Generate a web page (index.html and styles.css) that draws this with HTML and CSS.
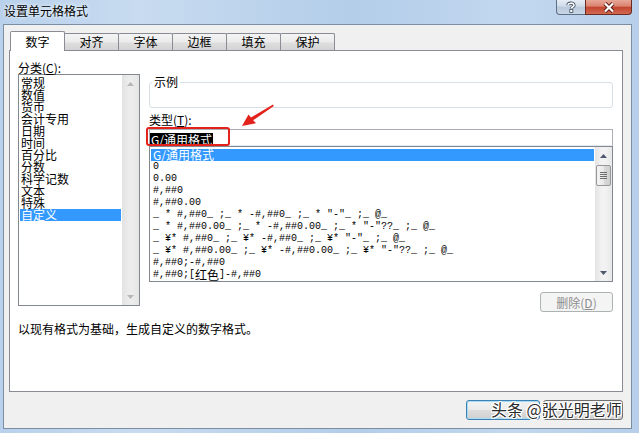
FILE: index.html
```html
<!DOCTYPE html>
<html lang="zh-CN">
<head>
    <meta charset="UTF-8">
    <title>设置单元格格式</title>
    <link rel="stylesheet" href="styles.css">
</head>
<body>

<div class="window">
    <div class="titlebar">
        <span class="title">设置单元格格式</span>
        <div class="caption-buttons">
            <div class="cap-btn cap-help">
                <svg width="14" height="12" viewBox="0 0 14 12">
                    <path d="M4 4.2 C4 1.6 10 1.4 10 4.2 C10 6 7.3 6 7.3 7.6" fill="none" stroke="#3b4a5c" stroke-width="3.2"/>
                    <path d="M4 4.2 C4 1.6 10 1.4 10 4.2 C10 6 7.3 6 7.3 7.6" fill="none" stroke="#fff" stroke-width="1.6"/>
                    <rect x="5.8" y="8.6" width="3" height="2.8" fill="#fff" stroke="#3b4a5c" stroke-width="0.8"/>
                </svg>
            </div>
            <div class="cap-btn cap-close">
                <svg width="14" height="11" viewBox="0 0 14 11">
                    <path d="M3 1.5 L11 9.5 M11 1.5 L3 9.5" stroke="#5a1e16" stroke-width="4"/>
                    <path d="M3 1.5 L11 9.5 M11 1.5 L3 9.5" stroke="#fff" stroke-width="2.2"/>
                </svg>
            </div>
        </div>
    </div>

    <div class="client">
        <div class="tabs">
            <div class="tab active">数字</div>
            <div class="tab">对齐</div>
            <div class="tab">字体</div>
            <div class="tab">边框</div>
            <div class="tab">填充</div>
            <div class="tab">保护</div>
        </div>

        <div class="panel">
            <div class="cols">
                <div class="cat-col">
                    <div class="label">分类(<u>C</u>):</div>
                    <div class="listbox">
                        <ul class="cat-items">
                            <li>常规</li>
                            <li>数值</li>
                            <li>货币</li>
                            <li>会计专用</li>
                            <li>日期</li>
                            <li>时间</li>
                            <li>百分比</li>
                            <li>分数</li>
                            <li>科学记数</li>
                            <li>文本</li>
                            <li>特殊</li>
                            <li class="selected">自定义</li>
                        </ul>
                        <div class="vscroll disabled">
                            <div class="arrow"><svg width="7" height="4" viewBox="0 0 7 4"><path d="M0 4 L3.5 0 L7 4Z" fill="#b7b7b7"/></svg></div>
                            <div class="track"></div>
                            <div class="arrow"><svg width="7" height="4" viewBox="0 0 7 4"><path d="M0 0 L3.5 4 L7 0Z" fill="#b7b7b7"/></svg></div>
                        </div>
                    </div>
                </div>

                <div class="main-col">
                    <div class="sample">
                        <span class="legend">示例</span>
                    </div>
                    <div class="label type-label">类型(<u>T</u>):</div>
                    <div class="type-input"><span class="sel-text">G/通用格式</span></div>
                    <div class="fmt-list">
                        <ul class="fmt-items">
                            <li class="selected">G/<span class="cn">通用格式</span></li>
                            <li>0</li>
                            <li>0.00</li>
                            <li>#,##0</li>
                            <li>#,##0.00</li>
                            <li>_ * #,##0_ ;_ * -#,##0_ ;_ * "-"_ ;_ @_</li>
                            <li>_ * #,##0.00_ ;_ * -#,##0.00_ ;_ * "-"??_ ;_ @_</li>
                            <li>_ ¥* #,##0_ ;_ ¥* -#,##0_ ;_ ¥* "-"_ ;_ @_</li>
                            <li>_ ¥* #,##0.00_ ;_ ¥* -#,##0.00_ ;_ ¥* "-"??_ ;_ @_</li>
                            <li>#,##0;-#,##0</li>
                            <li>#,##0;[<span class="cn">红色</span>]-#,##0</li>
                        </ul>
                        <div class="vscroll">
                            <div class="arrow"><svg width="7" height="4" viewBox="0 0 7 4"><path d="M0 4 L3.5 0 L7 4Z" fill="#4d5a6e"/></svg></div>
                            <div class="track">
                                <div class="thumb"><span></span><span></span><span></span><span></span></div>
                            </div>
                            <div class="arrow"><svg width="7" height="4" viewBox="0 0 7 4"><path d="M0 0 L3.5 4 L7 0Z" fill="#4d5a6e"/></svg></div>
                        </div>
                    </div>
                    <div class="del-row">
                        <button class="btn btn-disabled">删除(<u>D</u>)</button>
                    </div>
                </div>
            </div>
            <p class="desc">以现有格式为基础，生成自定义的数字格式。</p>
        </div>

        <!-- the OK / Cancel captions are hidden under the watermark in the shot -->
        <div class="footer">
            <button class="btn btn-default" aria-label="确定"></button>
            <button class="btn btn-cancel" aria-label="取消"></button>
        </div>
    </div>

    <!-- annotations drawn over the screenshot -->
    <div class="mark-box"></div>
    <svg class="mark-arrow" width="40" height="30" viewBox="238 100 40 30">
        <path d="M242 126 L248.5 114.5 L251 117.5 L273 104.5 L273.8 106 L253.2 120.3 L256 123.2 Z" fill="#e3221c"/>
    </svg>
    <div class="watermark">头条 @张光明老师</div>
</div>

</body>
</html>
```

FILE: styles.css
```css
* {
    box-sizing: border-box;
}

body {
    margin: 0;
    width: 639px;
    height: 433px;
    overflow: hidden;
    font-family: "Noto Sans CJK SC", "Liberation Sans", sans-serif;
    font-size: 12px;
    color: #000;
}

ul {
    list-style: none;
    margin: 0;
    padding: 0;
}

.window {
    position: relative;
    height: 433px;
    display: flex;
    flex-direction: column;
    background: linear-gradient(to right, #b9d1ec 0%, #c8dbf0 22%, #b3cde9 55%, #c2d7ef 80%, #b7cfea 100%);
}

/* title bar */

.titlebar {
    height: 24px;
    display: flex;
    align-items: flex-start;
    padding-right: 7px;
}

.title {
    padding: 3px 0 0 4px;
    line-height: 16px;
    text-shadow: 0 0 5px #eef5fc, 0 0 3px #eef5fc;
}

.caption-buttons {
    margin-left: auto;
    display: flex;
}

.cap-btn {
    height: 15px;
    display: flex;
    align-items: center;
    justify-content: center;
    border: 1px solid #5d6f87;
    border-top: none;
}

.cap-help {
    width: 29px;
    border-radius: 0 0 0 4px;
    border-right: none;
    background: linear-gradient(#e6edf5, #cfdbe8 45%, #b9c9db 50%, #c9d6e5);
}

.cap-close {
    width: 47px;
    border-color: #6b2a22;
    border-radius: 0 0 4px 0;
    background: linear-gradient(#e8a898, #d9826f 45%, #c4432e 50%, #d16a52);
}

/* dialog client area */

.client {
    flex: 1;
    margin: 0 7px 4px 3px;
    background: #f0f0f0;
    border: 1px solid #7d8ea3;
    padding: 6px 0 0 5px;
    display: flex;
    flex-direction: column;
}

.tabs {
    display: flex;
    align-items: flex-end;
    height: 20px;
    margin-bottom: -1px;
    padding-left: 1px;
}

.tab {
    width: 55px;
    height: 18px;
    margin-right: -1px;
    border: 1px solid #898c95;
    border-bottom: none;
    border-radius: 2px 2px 0 0;
    background: linear-gradient(#f4f4f4, #ebebeb 48%, #dedede 52%, #d2d2d2);
    text-align: center;
    line-height: 15px;
}

.tab.active {
    height: 20px;
    position: relative;
    z-index: 1;
    background: #fff;
    line-height: 19px;
}

.panel {
    width: 614px;
    height: 342px;
    border: 1px solid #898c95;
    background: #fff;
    padding: 11px 8px 0 8px;
}

.cols {
    display: flex;
    gap: 9px;
}

.label {
    line-height: 12px;
    height: 12px;
}

.cat-col {
    width: 122px;
}

.listbox {
    width: 122px;
    height: 232px;
    border: 1px solid #828790;
    display: flex;
}

.cat-items {
    flex: 1;
    padding: 2px 1px 0 1px;
}

.cat-items li {
    height: 12px;
    line-height: 12px;
    padding-left: 1px;
    white-space: nowrap;
}

.cat-items li.selected,
.fmt-items li.selected {
    background: #3399ff;
    color: #fff;
}

/* scrollbars */

.vscroll {
    width: 17px;
    display: flex;
    flex-direction: column;
    background: linear-gradient(to right, #e3e3e3, #f2f2f2 40%, #f2f2f2 60%, #e8e8e8);
}

.vscroll.disabled {
    background: linear-gradient(to right, #e2e2e2, #ececec 40%, #ececec 60%, #e4e4e4);
}

.vscroll .arrow {
    height: 17px;
    display: flex;
    align-items: center;
    justify-content: center;
}

.vscroll .track {
    flex: 1;
    padding: 1px 1px 0 1px;
}

.thumb {
    height: 21px;
    border: 1px solid #979797;
    border-radius: 2px;
    background: linear-gradient(to right, #f4f4f4, #e9e9e9 50%, #d9d9d9 51%, #cfcfcf);
    display: flex;
    flex-direction: column;
    align-items: center;
    justify-content: center;
    gap: 1px;
}

.thumb span {
    width: 7px;
    height: 1px;
    background: #6e6e6e;
}

/* right column */

.main-col {
    width: 464px;
    display: flex;
    flex-direction: column;
}

.sample {
    position: relative;
    margin-top: 20px;
    height: 26px;
    border: 1px solid #d5dfe5;
    border-radius: 3px;
}

.legend {
    position: absolute;
    top: -7px;
    left: 2px;
    padding: 0 2px;
    line-height: 12px;
    background: #fff;
}

.type-label {
    margin-top: 6px;
}

.type-input {
    margin-top: 3px;
    height: 17px;
    border: 1px solid #abadb3;
    border-bottom-color: #e3e9ef;
    padding: 1px 0 0 0;
}

.sel-text {
    display: inline-block;
    background: #000;
    color: #fff;
    line-height: 13px;
    padding: 0 1px 0 1px;
}

.fmt-list {
    height: 136px;
    border: 1px solid #828790;
    display: flex;
}

.fmt-items {
    flex: 1;
    padding: 2px 1px 0 1px;
}

.fmt-items li {
    height: 12px;
    line-height: 12px;
    padding-left: 2px;
    font-family: "Liberation Mono", "Noto Sans CJK SC", monospace;
    font-size: 10px;
    white-space: pre;
}

.fmt-items li.selected {
    font-family: "Noto Sans CJK SC", sans-serif;
    font-size: 12px;
}

.cn {
    font-family: "Noto Sans CJK SC", sans-serif;
    font-size: 12px;
    line-height: 12px;
    vertical-align: top;
}

.del-row {
    display: flex;
    justify-content: flex-end;
    margin-top: 10px;
}

/* buttons */

.btn {
    font-family: "Noto Sans CJK SC", sans-serif;
    font-size: 12px;
    height: 20px;
    padding: 0;
    border: 1px solid #707070;
    border-radius: 3px;
    background: linear-gradient(#f2f2f2, #ebebeb 48%, #dddddd 52%, #cfcfcf);
    color: #000;
}

.btn-disabled {
    width: 73px;
    border-color: #adb2b5;
    background: #f4f4f4;
    color: #8d8d8d;
}

.desc {
    margin: 11px 0 0 0;
    line-height: 12px;
}

.footer {
    display: flex;
    justify-content: flex-end;
    gap: 3px;
    margin-top: 8px;
    padding-right: 8px;
}

.btn-default {
    width: 74px;
    border-color: #3c7fb1;
    box-shadow: inset 0 0 0 1px #a6dcf6;
}

.btn-cancel {
    width: 80px;
}

/* overlays on top of the screenshot */

.mark-box {
    position: absolute;
    left: 146px;
    top: 127px;
    width: 84px;
    height: 19px;
    border: 2px solid #e3221c;
    border-radius: 3px;
}

.mark-arrow {
    position: absolute;
    left: 238px;
    top: 100px;
}

.watermark {
    position: absolute;
    left: 491px;
    top: 399px;
    font-size: 16px;
    line-height: 20px;
    color: #2b2b2b;
    white-space: nowrap;
    text-shadow: 1px 0 0 #fff, -1px 0 0 #fff, 0 1px 0 #fff, 0 -1px 0 #fff,
                 1px 1px 0 #fff, -1px -1px 0 #fff, 1px -1px 0 #fff, -1px 1px 0 #fff;
}
```
